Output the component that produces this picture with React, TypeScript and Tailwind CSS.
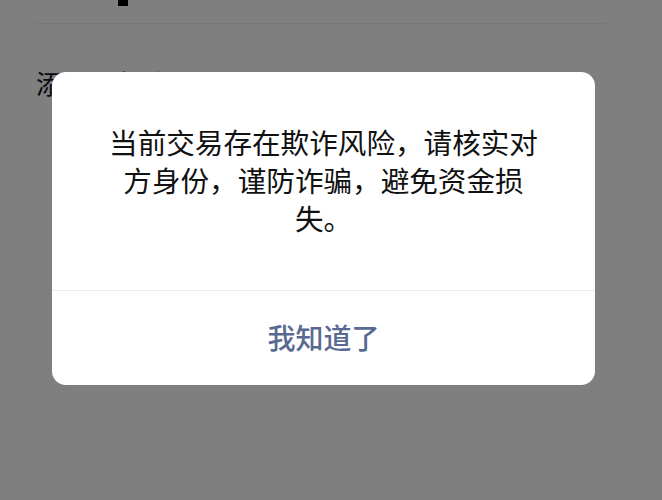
import React from "react";

export default function App() {
  const font = {
    fontFamily: '"Noto Sans CJK SC", "Noto Sans", sans-serif',
  };
  return (
    <div
      className="relative w-[662px] h-[500px] overflow-hidden bg-white"
      style={font}
    >
      {/* page underneath */}
      <div className="flex flex-col">
        <div className="h-[6px] flex">
          <div className="ml-[118px] w-[10px] h-[6px] bg-black" />
        </div>
        <div className="mt-[17px] ml-[36px] w-[571px] h-px bg-[#eeeeee]" />
        <div className="mt-[44px] ml-[36px] text-[26px] leading-[30px] text-[#141428]">
          添加朋友验证
        </div>
      </div>

      {/* overlay */}
      <div className="absolute inset-0 bg-black/50 pt-[72px] pl-[52px]">
        <div className="w-[543px] h-[313px] bg-white rounded-[14px] flex flex-col overflow-hidden">
          <div className="h-[218px] px-[48px] pt-[51px] text-center text-[28.6px] leading-[38px] text-[#111111]">
            当前交易存在欺诈风险，请核实对方身份，谨防诈骗，避免资金损失。
          </div>
          <div className="h-px bg-[#ececec]" />
          <div className="flex-1 flex items-center justify-center pb-[2px]">
            <span className="text-[28px] font-medium text-[#586a92]">
              我知道了
            </span>
          </div>
        </div>
      </div>
    </div>
  );
}
